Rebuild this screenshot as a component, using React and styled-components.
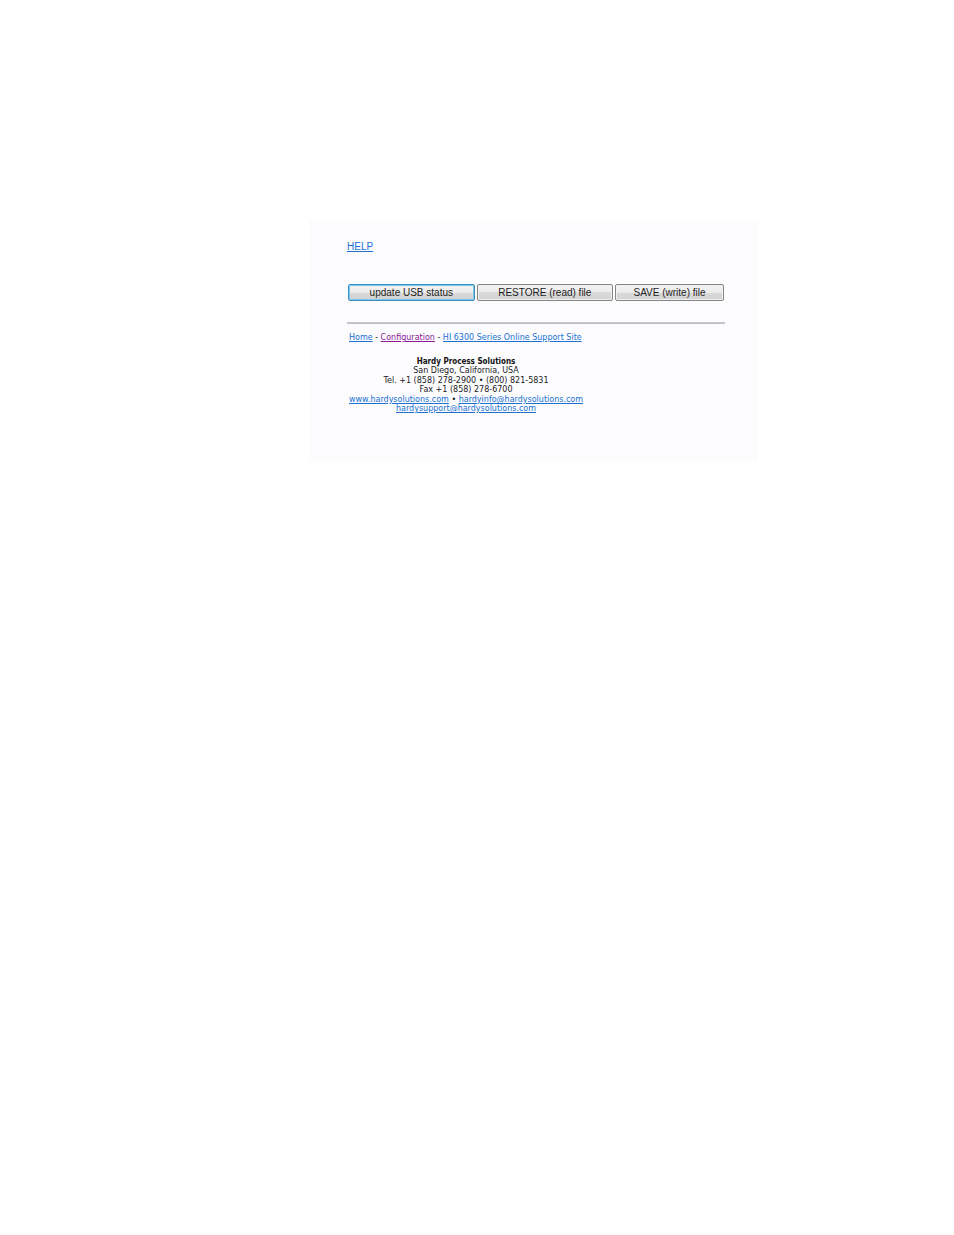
import React from "react";
import styled, { createGlobalStyle } from "styled-components";

const GlobalStyle = createGlobalStyle`
  *, *::before, *::after { box-sizing: border-box; }
  body {
    margin: 0;
    background: #ffffff;
    color: #222222;
    font-family: "DejaVu Sans", Verdana, sans-serif;
    font-size: 8px;
    line-height: 9px;
  }
`;

const Page = styled.div`
  padding: 220px 196px 40px 309px;
`;

const Panel = styled.main`
  background: #fcfcff;
  padding: 21px 33px 48px 38px;
`;

const Link = styled.a`
  color: ${({ $visited }) => ($visited ? "#8a1a96" : "#2070d0")};
  text-decoration: underline;
`;

const HelpLink = styled(Link)`
  display: block;
  width: fit-content;
  font-family: "Liberation Sans", Arial, sans-serif;
  font-size: 10px;
  line-height: 12px;
`;

const Actions = styled.div`
  display: flex;
  gap: 2px;
  margin-top: 31px;
  padding: 0 1px;
`;

const Button = styled.button`
  flex: ${({ $grow }) => $grow} 1 0;
  height: 17px;
  padding: 0;
  border: 1px solid ${({ $primary }) => ($primary ? "#3c8fc0" : "#858585")};
  border-radius: 2px;
  background: linear-gradient(#f4f4f4 0%, #ebebeb 50%, #dadada 50%, #d2d2d2 100%);
  box-shadow: inset 0 0 0 1px ${({ $primary }) => ($primary ? "#7cc8ea" : "#f0f0f0")};
  color: #1c1c1c;
  font-family: "Liberation Sans", Arial, sans-serif;
  font-size: 10px;
  line-height: 15px;
  white-space: nowrap;
`;

const Divider = styled.hr`
  height: 2px;
  margin: 21px 0 9px;
  border: 0;
  border-top: 1px solid #c8c8cc;
  border-bottom: 1px solid #c0c0c4;
`;

const Footer = styled.footer`
  width: fit-content;
  padding-left: 2px;
`;

const Nav = styled.nav`
  white-space: nowrap;
`;

const Contact = styled.address`
  display: flex;
  flex-direction: column;
  gap: 1px;
  margin-top: 15px;
  font-style: normal;
  text-align: center;
  white-space: nowrap;
`;

const Name = styled.strong`
  color: #111111;
  font-family: "DejaVu Sans Condensed", "Noto Sans", sans-serif;
  font-weight: 700;
`;

export default function App() {
  return (
    <>
      <GlobalStyle />
      <Page>
        <Panel>
          <HelpLink href="#help">HELP</HelpLink>
          <Actions>
            <Button type="button" $grow={127} $primary>update USB status</Button>
            <Button type="button" $grow={137}>RESTORE (read) file</Button>
            <Button type="button" $grow={109}>SAVE (write) file</Button>
          </Actions>
          <Divider />
          <Footer>
            <Nav>
              <Link href="#home">Home</Link> - <Link href="#configuration" $visited>Configuration</Link> -{" "}
              <Link href="#support">HI 6300 Series Online Support Site</Link>
            </Nav>
            <Contact>
              <div>
                <Name>Hardy Process Solutions</Name>
                <br />
                San Diego, California, USA
              </div>
              <div>
                Tel. +1 (858) 278-2900 • (800) 821-5831
                <br />
                Fax +1 (858) 278-6700
              </div>
              <div>
                <Link href="#website">www.hardysolutions.com</Link> •{" "}
                <Link href="mailto:hardyinfo@hardysolutions.com">hardyinfo@hardysolutions.com</Link>
                <br />
                <Link href="mailto:hardysupport@hardysolutions.com">hardysupport@hardysolutions.com</Link>
              </div>
            </Contact>
          </Footer>
        </Panel>
      </Page>
    </>
  );
}
